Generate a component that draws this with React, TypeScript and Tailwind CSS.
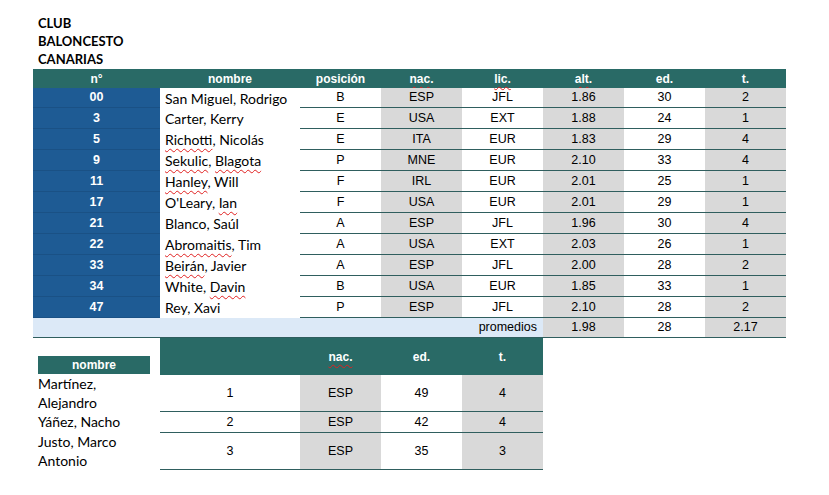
const players = [
  { n: '00', name: [['San Miguel, Rodrigo', false]], pos: 'B', nac: 'ESP', lic: 'JFL', alt: '1.86', ed: '30', t: '2' },
  { n: '3', name: [['Carter, Kerry', false]], pos: 'E', nac: 'USA', lic: 'EXT', alt: '1.88', ed: '24', t: '1' },
  { n: '5', name: [['Richotti', true], [', Nicolás', false]], pos: 'E', nac: 'ITA', lic: 'EUR', alt: '1.83', ed: '29', t: '4' },
  { n: '9', name: [['Sekulic', true], [', ', false], ['Blagota', true]], pos: 'P', nac: 'MNE', lic: 'EUR', alt: '2.10', ed: '33', t: '4' },
  { n: '11', name: [['Hanley', true], [', Will', false]], pos: 'F', nac: 'IRL', lic: 'EUR', alt: '2.01', ed: '25', t: '1' },
  { n: '17', name: [["O'Leary, ", false], ['Ian', true]], pos: 'F', nac: 'USA', lic: 'EUR', alt: '2.01', ed: '29', t: '1' },
  { n: '21', name: [['Blanco, Saúl', false]], pos: 'A', nac: 'ESP', lic: 'JFL', alt: '1.96', ed: '30', t: '4' },
  { n: '22', name: [['Abromaitis', true], [', Tim', false]], pos: 'A', nac: 'USA', lic: 'EXT', alt: '2.03', ed: '26', t: '1' },
  { n: '33', name: [['Beirán', true], [', Javier', false]], pos: 'A', nac: 'ESP', lic: 'JFL', alt: '2.00', ed: '28', t: '2' },
  { n: '34', name: [['White, ', false], ['Davin', true]], pos: 'B', nac: 'USA', lic: 'EUR', alt: '1.85', ed: '33', t: '1' },
  { n: '47', name: [['Rey, Xavi', false]], pos: 'P', nac: 'ESP', lic: 'JFL', alt: '2.10', ed: '28', t: '2' },
] as const;

const coaches = [
  { name: ['Martínez,', 'Alejandro'], n: '1', nac: 'ESP', ed: '49', t: '4' },
  { name: ['Yáñez, Nacho'], n: '2', nac: 'ESP', ed: '42', t: '4' },
  { name: ['Justo, Marco', 'Antonio'], n: '3', nac: 'ESP', ed: '35', t: '3' },
];

const sans = "font-['Liberation_Sans',Arial,sans-serif]";
const calibri = "font-['Lato','Open_Sans',sans-serif]";
const squiggle = 'underline decoration-wavy decoration-[#e02020] decoration-1 underline-offset-[3px]';

const App = () => {
  return (
    <div className="w-[829px] h-[495px] bg-white pl-[33px] pt-[14px] text-black">
      <div className={`${calibri} font-bold text-[13px] leading-[18px] pl-[5px]`}>
        <div>CLUB</div>
        <div>BALONCESTO</div>
        <div>CANARIAS</div>
      </div>

      {/* main roster */}
      <div className={`${sans} w-[753px] mt-px`}>
        <div className="flex h-[19px] bg-[#296a66] text-white font-bold text-[12px] items-center">
          <div className="w-[127px] text-center">n°</div>
          <div className="w-[140px] text-center">nombre</div>
          <div className="w-[81px] text-center">posición</div>
          <div className="w-[81px] text-center"><span className={squiggle}>nac.</span></div>
          <div className="w-[81px] text-center"><span className={squiggle}>lic.</span></div>
          <div className="w-[81px] text-center"><span className={squiggle}>alt.</span></div>
          <div className="w-[81px] text-center">ed.</div>
          <div className="w-[81px] text-center">t.</div>
        </div>
        {players.map((p, idx) => (
          <div key={p.n} className={`flex text-[12.5px] ${idx === 0 ? 'h-[20px]' : 'h-[21px]'}`}>
            <div className="w-[127px] bg-[#1e5b94] border-b border-[#1a5185] text-white font-bold flex items-center justify-center">{p.n}</div>
            <div className={`w-[140px] ${calibri} text-[14px] flex items-center pl-[5px] whitespace-pre`}>
              <span>
                {p.name.map(([s, bad], i) => (
                  <span key={i} className={bad ? squiggle : ''}>{s}</span>
                ))}
              </span>
            </div>
            <div className="w-[81px] border-b border-[#2f5e5e] flex items-center justify-center">{p.pos}</div>
            <div className="w-[81px] bg-[#d9d9d9] border-b border-[#2f5e5e] flex items-center justify-center">{p.nac}</div>
            <div className="w-[81px] border-b border-[#2f5e5e] flex items-center justify-center">{p.lic}</div>
            <div className="w-[81px] bg-[#d9d9d9] border-b border-[#2f5e5e] flex items-center justify-center">{p.alt}</div>
            <div className="w-[81px] border-b border-[#2f5e5e] flex items-center justify-center">{p.ed}</div>
            <div className="w-[81px] bg-[#d9d9d9] border-b border-[#2f5e5e] flex items-center justify-center">{p.t}</div>
          </div>
        ))}
        <div className="flex h-[20px] text-[12.5px] border-b border-[#2f5e5e]">
          <div className="w-[510px] bg-[#dce9f7] flex items-center justify-end pr-[6px]">promedios</div>
          <div className="w-[81px] bg-[#d9d9d9] flex items-center justify-center">1.98</div>
          <div className="w-[81px] flex items-center justify-center">28</div>
          <div className="w-[81px] bg-[#d9d9d9] flex items-center justify-center">2.17</div>
        </div>
      </div>

      {/* coaching staff */}
      <div className="flex w-[510px]">
        <div className="w-[127px]">
          <div className="h-[37px] flex items-end pl-[5px] pb-px">
            <div className={`${sans} w-[112px] h-[18px] bg-[#296a66] text-white font-bold text-[12px] flex items-center justify-center`}>nombre</div>
          </div>
          {coaches.map((c) => (
            <div key={c.n} className={`${calibri} text-[14px] leading-[18.5px] pl-[5px] ${c.name.length > 1 ? 'h-[37px]' : 'h-[21px] flex items-center'}`}>
              {c.name.map((l) => (
                <div key={l}>{l}</div>
              ))}
            </div>
          ))}
        </div>
        <div className={`${sans} w-[383px] text-[12.5px]`}>
          <div className="flex h-[37px] bg-[#296a66] text-white font-bold text-[12px] items-center">
            <div className="w-[140px]" />
            <div className="w-[81px] text-center"><span className={squiggle}>nac.</span></div>
            <div className="w-[81px] text-center">ed.</div>
            <div className="w-[81px] text-center">t.</div>
          </div>
          {coaches.map((c) => (
            <div key={c.n} className={`flex border-b border-[#2f5e5e] ${c.name.length > 1 ? 'h-[37px]' : 'h-[21px]'}`}>
              <div className="w-[140px] flex items-center justify-center">{c.n}</div>
              <div className="w-[81px] bg-[#d9d9d9] flex items-center justify-center">{c.nac}</div>
              <div className="w-[81px] flex items-center justify-center">{c.ed}</div>
              <div className="w-[81px] bg-[#d9d9d9] flex items-center justify-center">{c.t}</div>
            </div>
          ))}
        </div>
      </div>
    </div>
  );
};

export default App;
